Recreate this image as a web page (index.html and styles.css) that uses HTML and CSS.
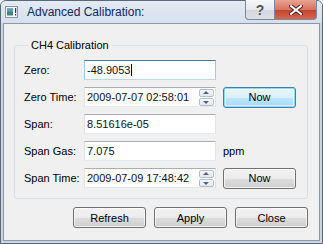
FILE: index.html
```html
<!DOCTYPE html>
<html lang="en">
<head>
	<meta charset="UTF-8">
	<title>Advanced Calibration</title>
	<link rel="stylesheet" href="styles.css">
</head>
<body>
	<div class="window">
		<div class="titlebar">
			<svg class="appicon" width="13" height="12" viewBox="0 0 13 12">
				<rect x="0.5" y="0.5" width="12" height="11" fill="#f4f6f8" stroke="#8a96a3"/>
				<rect x="2" y="2.5" width="6" height="7" fill="#3b8a7a"/>
				<rect x="2" y="2.5" width="6" height="3" fill="#5a9fc4"/>
				<rect x="10" y="2" width="1.2" height="5" fill="#1d3f8a"/>
				<rect x="10" y="8" width="1.2" height="1.5" fill="#1d3f8a"/>
			</svg>
			<span class="title">Advanced Calibration:</span>
			<div class="captionbtns">
				<a class="capbtn help">?</a>
				<a class="capbtn close">
					<svg width="14" height="10" viewBox="0 0 14 10">
						<path d="M2 1 L12 9 M12 1 L2 9" stroke="#4a2020" stroke-width="4" stroke-linecap="square"/>
						<path d="M2 1 L12 9 M12 1 L2 9" stroke="#ffffff" stroke-width="2" stroke-linecap="square"/>
					</svg>
				</a>
			</div>
		</div>
		<div class="client">
			<fieldset class="group">
				<legend>CH4 Calibration</legend>
				<div class="form">
					<label>Zero:</label>
					<div class="edit focus"><span class="caret">-48.9053</span></div>
					<span></span>

					<label>Zero Time:</label>
					<div class="edit spin">2009-07-07 02:58:01
						<div class="spinbtns"><i class="up"></i><i class="down"></i></div>
					</div>
					<a class="btn default">Now</a>

					<label>Span:</label>
					<div class="edit">8.51616e-05</div>
					<span></span>

					<label>Span Gas:</label>
					<div class="edit">7.075</div>
					<span class="unit">ppm</span>

					<label>Span Time:</label>
					<div class="edit spin">2009-07-09 17:48:42
						<div class="spinbtns"><i class="up"></i><i class="down"></i></div>
					</div>
					<a class="btn">Now</a>
				</div>
			</fieldset>
			<div class="actions">
				<a class="btn">Refresh</a>
				<a class="btn">Apply</a>
				<a class="btn">Close</a>
			</div>
		</div>
	</div>
</body>
</html>
```

FILE: styles.css
```css
*{
	margin: 0;
	padding: 0;
	box-sizing: border-box;
}
body{
	font-family: "Liberation Sans", Arial, sans-serif;
	font-size: 11px;
	color: #000;
	background: #f0f0f0;
}
.window{
	width: 323px;
	height: 244px;
	border: 1px solid #5b6878;
	border-radius: 6px 6px 0 0;
	background: #c8d5e3;
	padding: 0 2px 2px 2px;
	display: flex;
	flex-direction: column;
}
.titlebar{
	height: 22px;
	display: flex;
	align-items: flex-start;
	background: linear-gradient(#e3eaf2, #d6e0ec);
	margin: 0 -2px;
	padding-left: 4px;
	border-radius: 5px 5px 0 0;
}
.appicon{
	margin-top: 5px;
}
.title{
	margin-left: 9px;
	margin-top: 3px;
	font-size: 12px;
	line-height: 16px;
	color: #142660;
}
.captionbtns{
	margin-left: auto;
	margin-right: 5px;
	margin-top: -1px;
	display: flex;
}
.capbtn{
	height: 20px;
	display: flex;
	align-items: center;
	justify-content: center;
	border: 1px solid #7d8794;
	border-top: none;
}
.help{
	width: 29px;
	border-radius: 0 0 0 4px;
	border-right: none;
	background: linear-gradient(#f6f7f9, #e6eaee 50%, #d3d8de 51%, #dde1e6);
	color: #4a525c;
	font-size: 14px;
	font-weight: bold;
	text-shadow: 0 0 1px #fff;
}
.close{
	width: 43px;
	border-radius: 0 0 4px 0;
	background: linear-gradient(#e8a493, #d6745f 50%, #c2432c 51%, #d5674f);
}
.client{
	flex: 1;
	background: #f0f0f0;
	border: 1px solid #8898ab;
	display: flex;
	flex-direction: column;
}
.group{
	margin: 14px 11px 0 10px;
	border: 1px solid #d5dfe5;
	border-radius: 3px;
	padding: 8px 9px 11px 9px;
	height: 161px;
}
.group legend{
	margin-left: 4px;
	padding: 0 3px;
	line-height: 14px;
}
.form{
	display: grid;
	grid-template-columns: 53px 132px 73px;
	column-gap: 7px;
	row-gap: 7px;
	grid-auto-rows: 20px;
	align-items: center;
}
.form label{
	white-space: nowrap;
}
.edit{
	height: 20px;
	background: #fff;
	border: 1px solid #e2e3ea;
	border-top-color: #abadb3;
	border-bottom-color: #e3e9ef;
	padding: 0 0 0 2px;
	line-height: 18px;
	color: #111;
	position: relative;
}
.edit.focus{
	border-color: #a4c9e3;
	border-top-color: #3d7bad;
	border-bottom-color: #b7d9ed;
}
.caret{
	border-right: 1px solid #000;
	padding-right: 1px;
}
.spinbtns{
	position: absolute;
	right: 1px;
	top: 1px;
	width: 15px;
	display: flex;
	flex-direction: column;
	gap: 1px;
}
.spinbtns i{
	height: 8px;
	border: 1px solid #b5bdc8;
	border-radius: 2px;
	background: linear-gradient(#f6f8fa, #e3e8ee);
	position: relative;
}
.spinbtns i::after{
	content: "";
	position: absolute;
	left: 3px;
	border-left: 3.5px solid transparent;
	border-right: 3.5px solid transparent;
}
.spinbtns .up::after{
	top: 1px;
	border-bottom: 3px solid #4d6185;
}
.spinbtns .down::after{
	top: 2px;
	border-top: 3px solid #4d6185;
}
.btn{
	display: flex;
	align-items: center;
	justify-content: center;
	height: 21px;
	border: 1px solid #707070;
	border-radius: 3px;
	background: linear-gradient(#f2f2f2, #ebebeb 50%, #dddddd 51%, #cfcfcf);
	box-shadow: inset 0 0 0 1px rgba(255,255,255,0.7);
	color: #000;
	cursor: pointer;
}
.btn.default{
	border-color: #3c7fb1;
	background: linear-gradient(#eaf6fd, #d9f0fc 50%, #bee6fd 51%, #a7d9f5);
	box-shadow: inset 0 0 0 1px #8fd8f6, inset 0 0 0 2px rgba(255,255,255,0.6);
}
.actions{
	display: flex;
	justify-content: flex-end;
	gap: 8px;
	margin: 8px 11px 0 0;
}
.actions .btn{
	width: 73px;
	height: 21px;
}
```
